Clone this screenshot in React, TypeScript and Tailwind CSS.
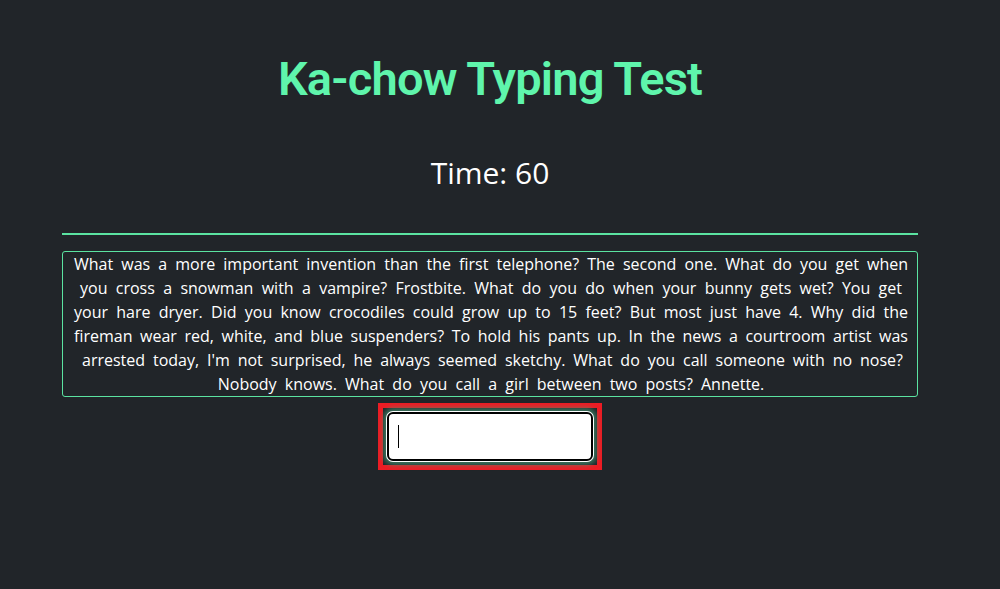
import React from "react";

const lines = [
  "What was a more important invention than the first telephone? The second one. What do you get when",
  "you cross a snowman with a vampire? Frostbite. What do you do when your bunny gets wet? You get",
  "your hare dryer. Did you know crocodiles could grow up to 15 feet? But most just have 4. Why did the",
  "fireman wear red, white, and blue suspenders? To hold his pants up. In the news a courtroom artist was",
  "arrested today, I'm not surprised, he always seemed sketchy. What do you call someone with no nose?",
];
const lastLine = "Nobody knows. What do you call a girl between two posts? Annette.";

export default function App() {
  return (
    <div
      className="min-h-[589px] w-full bg-[#212529] text-white"
      style={{ fontFamily: '"Open Sans", "Noto Sans", sans-serif' }}
    >
      <div className="ml-[62px] w-[856px] flex flex-col items-center">
        <h1
          className="pt-[50px] text-[47px] leading-[58px] font-semibold tracking-[-0.8px] text-[#5ff5ac]"
          style={{ fontFamily: 'Roboto, "Liberation Sans", sans-serif' }}
        >
          Ka-chow Typing Test
        </h1>

        <div className="mt-[47px] text-[30px] leading-[36px] font-normal">Time: 60</div>

        <div className="mt-[42px] h-[2px] w-full bg-[#5be3a1]" />

        {/* passage */}
        <div className="mt-[16px] w-full rounded-[3px] border border-[#5be3a1] pl-[11px] pr-[9px] text-[16px] leading-[24px]">
          {lines.map((l, i) => (
            <div
              key={i}
              className={`text-justify [text-align-last:justify] ${i === 1 ? "px-[6px]" : i === 4 ? "pl-[8px] pr-[5px]" : ""}`}
            >
              {l}
            </div>
          ))}
          <div className="text-center [word-spacing:4px]">{lastLine}</div>
        </div>

        {/* input */}
        <div className="mt-[6px] border-[5px] border-[#ed1c24] p-[4px]">
          <div className="relative">
            <input
              type="text"
              className="block h-[49px] w-[206px] rounded-[6px] border-2 border-black bg-white px-[10px] text-black outline-none shadow-[0_0_0_1px_#ffffff,0_0_5px_4px_rgba(70,150,115,0.7)]"
            />
            <span className="absolute left-[11px] top-[13px] h-[23px] w-[1px] bg-black" />
          </div>
        </div>
      </div>
    </div>
  );
}
